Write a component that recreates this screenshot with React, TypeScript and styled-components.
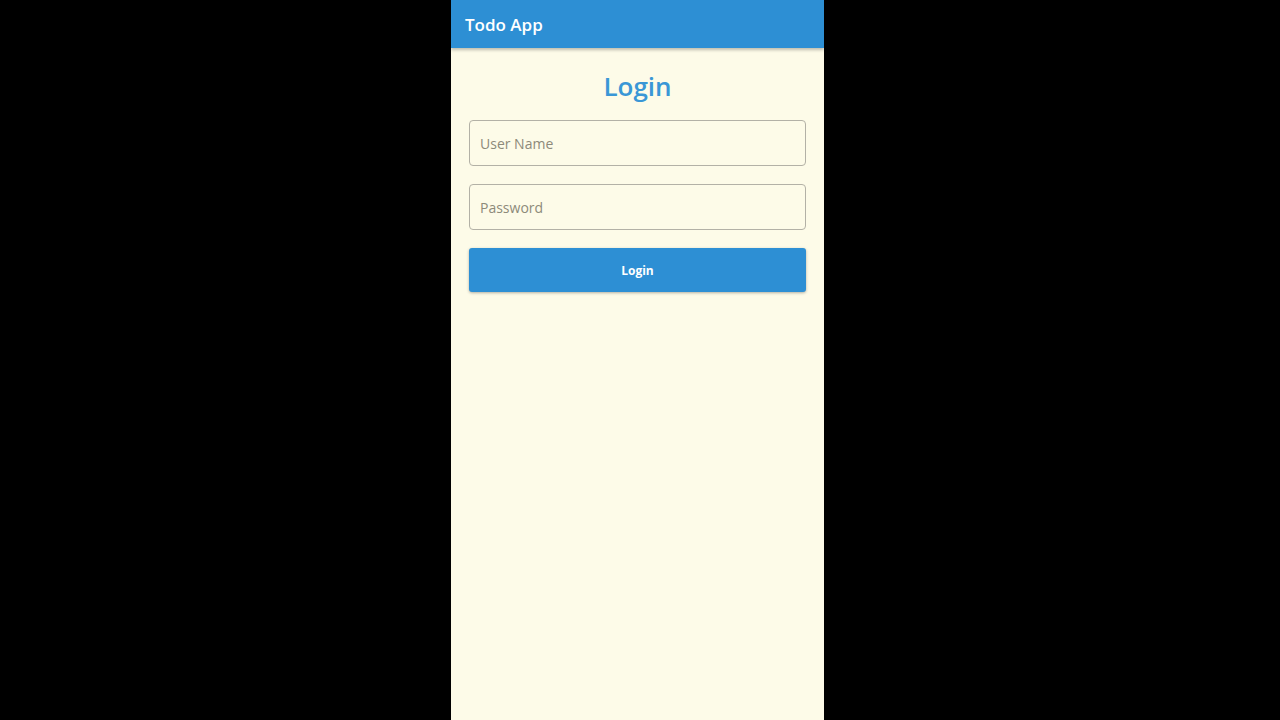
import styled, { createGlobalStyle } from 'styled-components';

const GlobalStyle = createGlobalStyle`
  html, body {
    margin: 0;
    padding: 0;
    background: #000;
    height: 100%;
  }
  #root {
    height: 100%;
  }
  * {
    box-sizing: border-box;
  }
`;

const Page = styled.div`
  display: flex;
  justify-content: center;
  height: 720px;
  padding-right: 5px;
  background: #000;
`;

const Phone = styled.div`
  width: 373px;
  height: 100%;
  background: #fdfbe8;
  display: flex;
  flex-direction: column;
  font-family: "Open Sans", "Noto Sans", sans-serif;
`;

const Header = styled.header`
  height: 48px;
  background: #2d8fd4;
  box-shadow: 0 2px 3px rgba(0, 0, 0, 0.25);
  display: flex;
  align-items: center;
  padding: 0 14px;
  color: #fff;
  font-size: 17px;
  font-weight: 600;
`;

const Form = styled.form`
  display: flex;
  flex-direction: column;
  padding: 0 18px;
`;

const Title = styled.h1`
  margin: 21px 0 17px;
  text-align: center;
  color: #3a97d6;
  font-size: 26px;
  font-weight: 600;
  line-height: 34px;
`;

const Field = styled.input`
  height: 46px;
  margin-bottom: 18px;
  border: 1px solid #b3b1a6;
  border-radius: 4px;
  background: transparent;
  padding: 0 10px;
  font-family: inherit;
  font-size: 14px;
  color: #333;
  outline: none;

  &::placeholder {
    color: #8d8a7a;
  }
`;

const Button = styled.button`
  height: 44px;
  border: none;
  border-radius: 3px;
  background: #2d8fd4;
  color: #fff;
  font-family: inherit;
  font-size: 12px;
  font-weight: 700;
  box-shadow: 0 1px 3px rgba(0, 0, 0, 0.3);
  cursor: pointer;
`;

export default function App() {
    return (
        <>
            <GlobalStyle />
            <Page>
                <Phone>
                    <Header>Todo App</Header>
                    <Form onSubmit={(e) => e.preventDefault()}>
                        <Title>Login</Title>
                        <Field placeholder="User Name" />
                        <Field type="password" placeholder="Password" />
                        <Button type="submit">Login</Button>
                    </Form>
                </Phone>
            </Page>
        </>
    );
}
